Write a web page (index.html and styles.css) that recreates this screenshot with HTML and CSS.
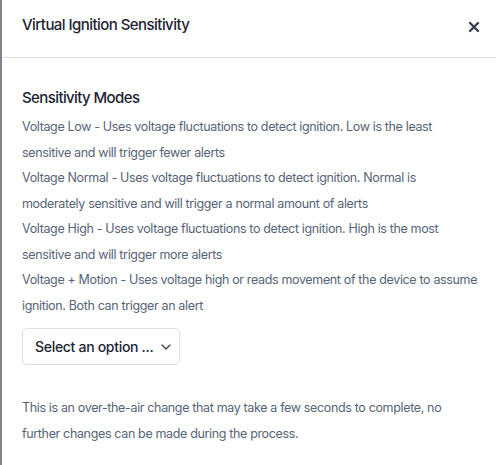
FILE: index.html
```html
<!DOCTYPE html>
<html>
<head>
<meta charset="utf-8">
<link rel="stylesheet" href="styles.css">
</head>
<body>
<div class="modal">
  <div class="header">
    <h2 class="title">Virtual Ignition Sensitivity</h2>
    <button class="close" aria-label="Close">
      <svg width="12" height="12" viewBox="0 0 12 12"><path d="M2 2L10 10M10 2L2 10" stroke="#3a4250" stroke-width="2.4" stroke-linecap="round"/></svg>
    </button>
  </div>
  <div class="body">
    <h3 class="section">Sensitivity Modes</h3>
    <p class="desc">Voltage Low - Uses voltage fluctuations to detect ignition. Low is the least sensitive and will trigger fewer alerts</p>
    <p class="desc">Voltage Normal - Uses voltage fluctuations to detect ignition. Normal is moderately sensitive and will trigger a normal amount of alerts</p>
    <p class="desc">Voltage High - Uses voltage fluctuations to detect ignition. High is the most sensitive and will trigger more alerts</p>
    <p class="desc">Voltage + Motion - Uses voltage high or reads movement of the device to assume ignition. Both can trigger an alert</p>
    <div class="select">
      <span>Select an option ...</span>
      <svg width="10" height="6" viewBox="0 0 10 6"><path d="M1 1L5 5L9 1" fill="none" stroke="#3a4250" stroke-width="1.3" stroke-linecap="round" stroke-linejoin="round"/></svg>
    </div>
    <p class="note">This is an over-the-air change that may take a few seconds to complete, no further changes can be made during the process.</p>
  </div>
</div>
</body>
</html>
```
FILE: styles.css
```css
html, body { margin: 0; padding: 0; background: #fff; }
body { font-family: Inter, "Noto Sans", sans-serif; }
.modal {
  width: 496px;
  height: 465px;
  box-sizing: border-box;
  border-left: 2px solid #7d8592;
  background: #fff;
}
.header {
  height: 58px;
  box-sizing: border-box;
  border-bottom: 1px solid #dcdfe3;
  display: flex;
  align-items: center;
  justify-content: space-between;
  padding: 0 14px 0 20px;
}
.title {
  margin: 0;
  font-size: 15px;
  font-weight: 500;
  color: #1c2433;
  letter-spacing: -0.55px;
  margin-top: -8px;
}
.close {
  border: 0;
  background: none;
  padding: 0;
  width: 16px;
  height: 16px;
  display: flex;
  align-items: center;
  justify-content: center;
  margin-top: -3px;
}
.body {
  padding: 30px 16px 0 20px;
}
.section {
  margin: 0 0 6px 0;
  font-size: 15px;
  font-weight: 500;
  color: #1c2433;
  letter-spacing: -0.6px;
  line-height: 20px;
}
.desc, .note {
  margin: 0;
  font-size: 12.5px;
  line-height: 25.5px;
  color: #566477;
  letter-spacing: -0.35px;
}
.select {
  margin-top: 10px;
  width: 158px;
  height: 37px;
  box-sizing: border-box;
  border: 1px solid #dcdfe3;
  border-radius: 5px;
  display: flex;
  align-items: center;
  justify-content: space-between;
  padding: 0 8px 0 12px;
  font-size: 14px;
  font-weight: 500;
  color: #1c2433;
  letter-spacing: -0.3px;
}
.note { margin-top: 30px; }
```
